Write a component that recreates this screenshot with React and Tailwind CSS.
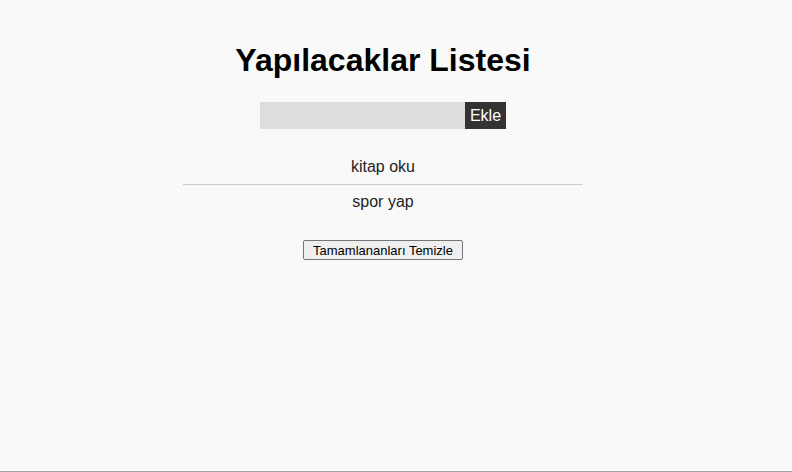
export default function App() {
  const todos = ['kitap oku', 'spor yap']

  return (
    <div className="w-[792px] h-[472px] bg-[#f9f9f9] border-b border-[#a3a3a3] font-['Liberation_Sans',Arial,sans-serif] text-[#222] overflow-hidden">
      <div className="w-[766px] flex flex-col items-center pt-[42px]">
        <h1 className="text-[32px] leading-[37px] font-bold text-black">Yapılacaklar Listesi</h1>

        <div className="mt-[23px] flex">
          <input
            type="text"
            className="w-[205px] h-[27px] bg-[#dddddd] outline-none px-2 text-[15px]"
          />
          <button className="h-[27px] w-[41px] bg-[#333333] text-white text-[16px] leading-none">
            Ekle
          </button>
        </div>

        <ul className="mt-[21px] w-[400px] text-[16px] text-center">
          {todos.map((t, i) => (
            <li
              key={t}
              className={`py-[8px] leading-[18px] ${i < todos.length - 1 ? 'border-b border-[#cccccc]' : ''}`}
            >
              {t}
            </li>
          ))}
        </ul>

        <button className="mt-[21px] h-[20px] px-[9px] bg-[#efefef] border border-[#767676] rounded-[2px] text-[13px] leading-none text-black">
          Tamamlananları Temizle
        </button>
      </div>
    </div>
  )
}
